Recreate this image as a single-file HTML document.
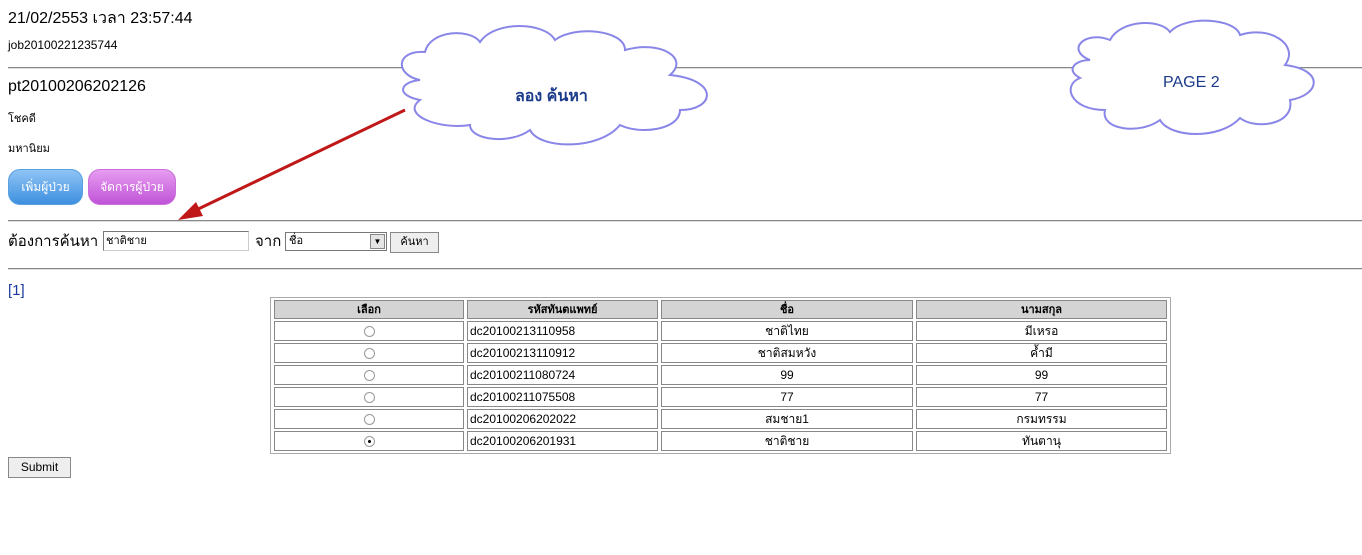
<!DOCTYPE html>
<html><head><meta charset="utf-8"><style>
body{margin:0;width:1362px;height:555px;background:#fff;position:relative;overflow:hidden;font-family:"Liberation Sans","Noto Sans CJK SC",sans-serif;color:#000}
.a{position:absolute;white-space:nowrap}
.hr{position:absolute;left:8px;width:1354px;height:0;border-top:1px solid #888;border-bottom:1px solid #ddd}
.btn{position:absolute;height:34px;border-radius:12px;color:#fff;font-size:12px;text-align:center;line-height:34px}
table{position:absolute;left:270px;top:297px;width:901px;border:1px solid #aaa;border-collapse:separate;border-spacing:3px 2px;font-size:12px;line-height:14px}
td,th{border:1px solid #888;height:18px;padding:0 2px}
th{background:#d4d4d4;font-size:11px;height:17px}
td.c{text-align:center}
.r{display:inline-block;width:9px;height:9px;border:1px solid #999;border-radius:50%;vertical-align:middle;position:relative}
.r.on:after{content:"";position:absolute;left:3px;top:3px;width:3px;height:3px;background:#000;border-radius:50%}
</style></head><body>
<div class="a" style="left:8px;top:6px;font-size:16px">21/02/2553 เวลา 23:57:44</div>
<div class="a" style="left:8px;top:38px;font-size:12px">job20100221235744</div>
<div class="hr" style="top:67px"></div>
<div class="a" style="left:8px;top:78px;font-size:16px">pt20100206202126</div>
<div class="a" style="left:8px;top:109px;font-size:11px">โชคดี</div>
<div class="a" style="left:8px;top:139px;font-size:11px">มหานิยม</div>
<div class="btn" style="left:8px;top:169px;width:73px;background:linear-gradient(#8fc4f5,#3d8fe0);border:1px solid #5aa0e0">เพิ่มผู้ป่วย</div>
<div class="btn" style="left:88px;top:169px;width:86px;background:linear-gradient(#e79cf0,#c053d8);border:1px solid #c870d8">จัดการผู้ป่วย</div>
<div class="hr" style="top:220px"></div>
<div class="a" style="left:8px;top:229px;font-size:15px">ต้องการค้นหา</div>
<div class="a" style="left:103px;top:231px;width:142px;height:18px;border:1px solid #777;border-right-color:#ccc;border-bottom-color:#ccc;font-size:11px;line-height:18px;padding-left:2px">ชาติชาย</div>
<div class="a" style="left:255px;top:229px;font-size:15px">จาก</div>
<div class="a" style="left:285px;top:232px;width:97px;height:17px;border:1px solid #777;font-size:11px;line-height:17px;padding-left:3px">ชื่อ<span style="position:absolute;right:1px;top:1px;width:13px;height:13px;background:#e4e4e4;border:1px solid #888;font-size:8px;line-height:13px;text-align:center">▼</span></div>
<div class="a" style="left:390px;top:232px;width:47px;height:19px;border:1px solid #888;background:#eee;font-size:11px;line-height:19px;text-align:center">ค้นหา</div>
<div class="hr" style="top:268px"></div>
<div class="a" style="left:8px;top:282px;font-size:15px;color:#1a3aa0">[1]</div>
<table>
<tr><th style="width:184px">เลือก</th><th style="width:185px">รหัสทันตแพทย์</th><th style="width:246px">ชื่อ</th><th>นามสกุล</th></tr>
<tr><td class="c"><span class="r"></span></td><td>dc20100213110958</td><td class="c">ชาติไทย</td><td class="c">มีเหรอ</td></tr>
<tr><td class="c"><span class="r"></span></td><td>dc20100213110912</td><td class="c">ชาติสมหวัง</td><td class="c">ค้ำมี</td></tr>
<tr><td class="c"><span class="r"></span></td><td>dc20100211080724</td><td class="c">99</td><td class="c">99</td></tr>
<tr><td class="c"><span class="r"></span></td><td>dc20100211075508</td><td class="c">77</td><td class="c">77</td></tr>
<tr><td class="c"><span class="r"></span></td><td>dc20100206202022</td><td class="c">สมชาย1</td><td class="c">กรมทรรม</td></tr>
<tr><td class="c"><span class="r on"></span></td><td>dc20100206201931</td><td class="c">ชาติชาย</td><td class="c">ทันตานุ</td></tr>
</table>
<div class="a" style="left:8px;top:457px;width:61px;height:19px;border:1px solid #888;background:#eee;font-size:12px;line-height:19px;text-align:center">Submit</div>
<svg class="a" style="left:0;top:0" width="1362" height="555">
<g fill="#fff" stroke="#8a86e8" stroke-width="2">
<path d="M420,80 C395,75 395,50 425,52 C430,30 470,28 480,42 C495,20 545,22 555,40 C575,25 625,30 625,50 C660,40 690,58 670,75 C720,80 715,110 680,110 C680,130 640,135 620,125 C600,150 540,150 530,130 C510,145 470,140 470,125 C440,130 400,115 420,100 C395,95 400,82 420,80 Z"/>
<path d="M1090,60 C1065,50 1085,30 1110,40 C1120,20 1160,18 1170,32 C1185,15 1235,18 1240,35 C1270,25 1300,45 1285,65 C1325,70 1320,95 1290,100 C1295,125 1255,130 1240,118 C1220,140 1170,138 1160,120 C1140,135 1100,130 1105,110 C1070,110 1062,85 1080,78 C1065,70 1075,60 1090,60 Z"/>
</g>
<text x="515" y="101" font-family="Liberation Sans,Noto Sans CJK SC,sans-serif" font-size="16" font-weight="bold" fill="#1a3a8a">ลอง ค้นหา</text>
<text x="1163" y="87" font-family="Liberation Sans,sans-serif" font-size="16" fill="#1a3a8a">PAGE 2</text>
<line x1="405" y1="110" x2="192" y2="212" stroke="#c01818" stroke-width="3"/>
<polygon points="178,220 196,202 203,216" fill="#c01818"/>
</svg>
</body></html>
